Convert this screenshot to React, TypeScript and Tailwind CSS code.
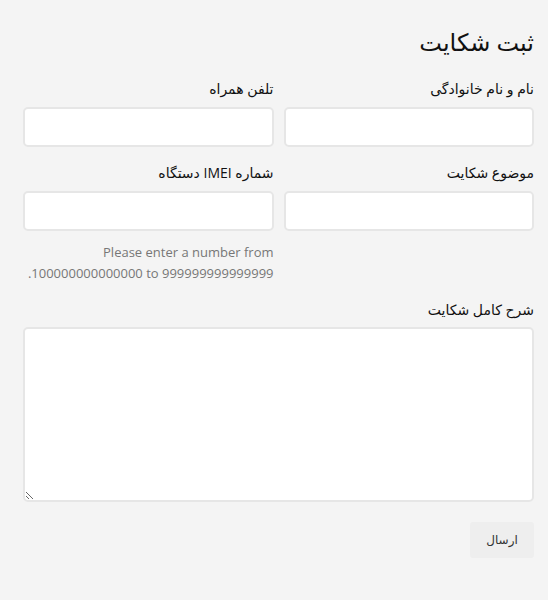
const FONT = "font-['Open_Sans','DejaVu_Sans',sans-serif]";

function Field({ label, children }: { label: string; children?: React.ReactNode }) {
  return (
    <div className="flex flex-col">
      <label className="mb-[8px] text-[14px] leading-[20px] text-[#111]">{label}</label>
      <input className="h-[40px] w-full rounded-[5px] border-2 border-[#e6e6e6] bg-white outline-none" />
      {children}
    </div>
  );
}

export default function App() {
  return (
    <div dir="rtl" className={`min-h-[600px] w-[548px] bg-[#f4f4f4] ${FONT}`}>
      <div className="pl-[23px] pr-[14px] pt-[25px]">
        <h1 className="mb-[20px] text-[24px] leading-[34px] text-[#111]">ثبت شکایت</h1>
        <div className="grid grid-cols-2 gap-x-[10px] gap-y-[16px]">
          <Field label="نام و نام خانوادگی" />
          <Field label="تلفن همراه" />
          <Field label="موضوع شکایت" />
          <Field label="شماره IMEI دستگاه">
            <p className="mt-[11px] text-[13px] leading-[21px] text-[#777]">
              Please enter a number from 100000000000000 to 999999999999999.
            </p>
          </Field>
        </div>
        <div className="mt-[16px] flex flex-col">
          <label className="mb-[7px] text-[14px] leading-[20px] text-[#111]">شرح کامل شکایت</label>
          <textarea className="h-[175px] w-full rounded-[5px] border-2 border-[#e6e6e6] bg-white outline-none" />
        </div>
        <div className="mt-[20px] flex">
          <button className="h-[36px] w-[64px] rounded-[3px] bg-[#eeeeee] text-[12px] text-[#333]">ارسال</button>
        </div>
      </div>
    </div>
  );
}
